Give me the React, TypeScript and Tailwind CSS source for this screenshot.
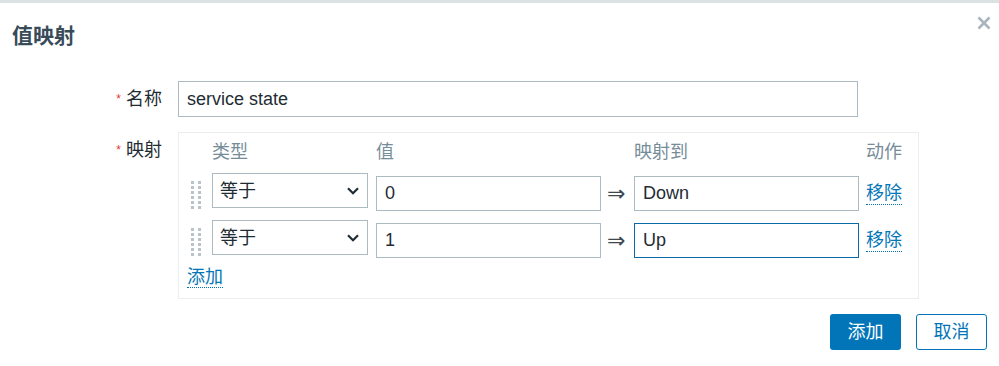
import React from 'react';

const rows = [
  { type: '等于', value: '0', newValue: 'Down', focused: false },
  { type: '等于', value: '1', newValue: 'Up', focused: true },
];

function DragHandle() {
  const dots = [];
  for (let r = 0; r < 6; r++) {
    for (let c = 0; c < 2; c++) {
      dots.push(<rect key={`${r}-${c}`} x={c * 7} y={r * 5} width="3" height="3" fill="#b8c4ca" />);
    }
  }
  return (
    <svg width="10" height="28" viewBox="0 0 10 28">
      {dots}
    </svg>
  );
}

function Chevron() {
  return (
    <svg width="12" height="8" viewBox="0 0 12 8" fill="none">
      <path d="M1 1.2 6 6.2 11 1.2" stroke="#1f2c33" strokeWidth="2.2" />
    </svg>
  );
}

export default function App() {
  return (
    <div className="relative h-[366px] w-[999px] overflow-hidden border-t-[3px] border-[#dce1e4] bg-white font-['Liberation_Sans','Noto_Sans_CJK_SC',sans-serif] text-[18px] text-[#1f2c33]">
      <button className="absolute right-[8px] top-[13px] p-0" aria-label="close">
        <svg width="14" height="14" viewBox="0 0 14 14">
          <path d="M1.5 1.5 12.5 12.5M12.5 1.5 1.5 12.5" stroke="#a9b5bc" strokeWidth="2.6" />
        </svg>
      </button>

      <div className="px-[12px] pt-[21px]">
        <h4 className="text-[21px] font-bold leading-[24px] text-[#384b58]">值映射</h4>
      </div>

      <div className="mt-[33px] flex flex-col">
        <div className="flex items-center">
          <label className="w-[178px] pr-[16px] text-right leading-[36px]">
            <span className="mr-[5px] align-top text-[12px] text-[#e33734]">*</span>名称
          </label>
          <input
            className="h-[36px] w-[680px] border border-[#acbbc2] px-[8px] text-[18px] outline-none"
            defaultValue="service state"
          />
        </div>

        <div className="mt-[15px] flex items-start">
          <label className="w-[178px] pr-[16px] pt-[6px] text-right leading-[24px]">
            <span className="mr-[5px] align-top text-[12px] text-[#e33734]">*</span>映射
          </label>
          <div className="w-[741px] border border-[#ebeef0] px-[8px] pb-[10px] pt-[7px]">
            <div className="grid h-[24px] grid-cols-[25px_164px_258px_232px_auto] leading-[24px] text-[#768d99]">
              <div />
              <div>类型</div>
              <div>值</div>
              <div>映射到</div>
              <div>动作</div>
            </div>

            {rows.map((row, i) => (
              <div key={i} className="mt-[9px] grid h-[38px] grid-cols-[25px_164px_225px_33px_232px_auto] items-start">
                <div className="mt-[8px] pl-[4px]">
                  <DragHandle />
                </div>
                <div className="flex h-[35px] w-[156px] items-center justify-between border border-[#acbbc2] pl-[7px] pr-[8px]">
                  <span className="pt-[2px]">{row.type}</span>
                  <Chevron />
                </div>
                <input
                  className="mt-[3px] h-[35px] w-[225px] border border-[#acbbc2] px-[8px] text-[18px] outline-none"
                  defaultValue={row.value}
                />
                <div className="mt-[3px] pl-[6px] font-['DejaVu_Sans',sans-serif] text-[22px] leading-[35px] text-[#3c474e]">
                  ⇒
                </div>
                <input
                  className={`mt-[3px] h-[35px] w-[225px] border px-[8px] text-[18px] outline-none ${
                    row.focused ? 'border-[#0b6aa5]' : 'border-[#acbbc2]'
                  }`}
                  defaultValue={row.newValue}
                />
                <div className="mt-[3px] leading-[35px]">
                  <span className="border-b border-dotted border-[#0275b8] pb-[1px] leading-[22px] text-[#0275b8]">移除</span>
                </div>
              </div>
            ))}

            <div className="mt-[9px] leading-[21px]">
              <span className="border-b border-dotted border-[#0275b8] text-[#0275b8]">添加</span>
            </div>
          </div>
        </div>

        <div className="mt-[15px] flex justify-end gap-[15px] pr-[12px]">
          <button className="h-[36px] w-[71px] rounded-[3px] bg-[#0275b8] text-[18px] text-white">添加</button>
          <button className="h-[36px] w-[71px] rounded-[3px] border border-[#0275b8] bg-white text-[18px] text-[#0275b8]">
            取消
          </button>
        </div>
      </div>
    </div>
  );
}
